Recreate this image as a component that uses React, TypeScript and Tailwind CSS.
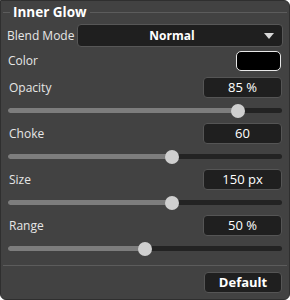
import React from 'react';

type SliderRow = { label: string; value: string; frac: number };

const rows: SliderRow[] = [
  { label: 'Opacity', value: '85 %', frac: 0.84 },
  { label: 'Choke', value: '60', frac: 0.6 },
  { label: 'Size', value: '150 px', frac: 0.6 },
  { label: 'Range', value: '50 %', frac: 0.5 },
];

const Slider: React.FC<{ frac: number }> = ({ frac }) => (
  <div className="h-[25px] flex items-center px-[7px]">
    <div className="relative w-full h-[5px] rounded-full bg-[#232323]">
      <div className="absolute left-0 top-0 h-full rounded-full bg-[#7d7d7d]" style={{ width: `${frac * 100}%` }} />
      <div
        className="absolute top-1/2 w-[14px] h-[14px] rounded-full bg-[#cfcfcf] -translate-x-1/2 -translate-y-1/2"
        style={{ left: `${frac * 100}%` }}
      />
    </div>
  </div>
);

export default function App() {
  return (
    <div
      className="w-[290px] h-[300px] bg-[#424242] border border-[#2f2f2f] rounded-tr-[6px] rounded-b-[6px] flex flex-col text-[12px] text-[#e6e6e6]"
      style={{ fontFamily: '"Open Sans", "Noto Sans", sans-serif' }}
    >
      {/* Legend */}
      <div className="h-[23px] flex items-center px-[2px]">
        <div className="w-[7px] h-px bg-[#5c5c5c]" />
        <span className="px-[3px] font-bold text-[13.5px] text-white leading-none">Inner Glow</span>
        <div className="flex-1 h-px bg-[#5c5c5c]" />
      </div>

      {/* Blend mode */}
      <div className="h-[23px] flex items-center pl-[6px] pr-[6px]">
        <span className="w-[70px]">Blend Mode</span>
        <div className="flex-1 h-full relative flex items-center justify-center pr-[16px] rounded-[4px] bg-[#1f1f1f] border border-[#575757]">
          <span className="font-bold text-white text-[12px]">Normal</span>
          <svg className="absolute right-[8px]" width="10" height="6" viewBox="0 0 10 6">
            <path d="M0 0 L10 0 L5 6 Z" fill="#d8d8d8" />
          </svg>
        </div>
      </div>

      {/* Color */}
      <div className="mt-[4px] h-[20px] flex items-center justify-between pl-[7px] pr-[8px]">
        <span>Color</span>
        <div className="w-[45px] h-full rounded-[5px] bg-black border border-[#e8e8e8]" />
      </div>

      <div className="mt-[6px] flex flex-col">
        {rows.map((r) => (
          <div key={r.label}>
            <div className="h-[21px] flex items-center justify-between pl-[8px] pr-[7px]">
              <span>{r.label}</span>
              <div className="w-[79px] h-full flex items-center justify-center rounded-[4px] bg-[#1f1f1f] border border-[#555555] text-white text-[13px]">
                {r.value}
              </div>
            </div>
            <Slider frac={r.frac} />
          </div>
        ))}
      </div>

      {/* Separator */}
      <div className="mt-[4px] mx-[2px] h-px bg-[#5c5c5c]" />

      <div className="mt-[6px] flex justify-end pr-[7px]">
        <div className="w-[78px] h-[21px] flex items-center justify-center rounded-[4px] bg-[#1f1f1f] border border-[#555555] font-bold text-white text-[13px]">
          Default
        </div>
      </div>
    </div>
  );
}
